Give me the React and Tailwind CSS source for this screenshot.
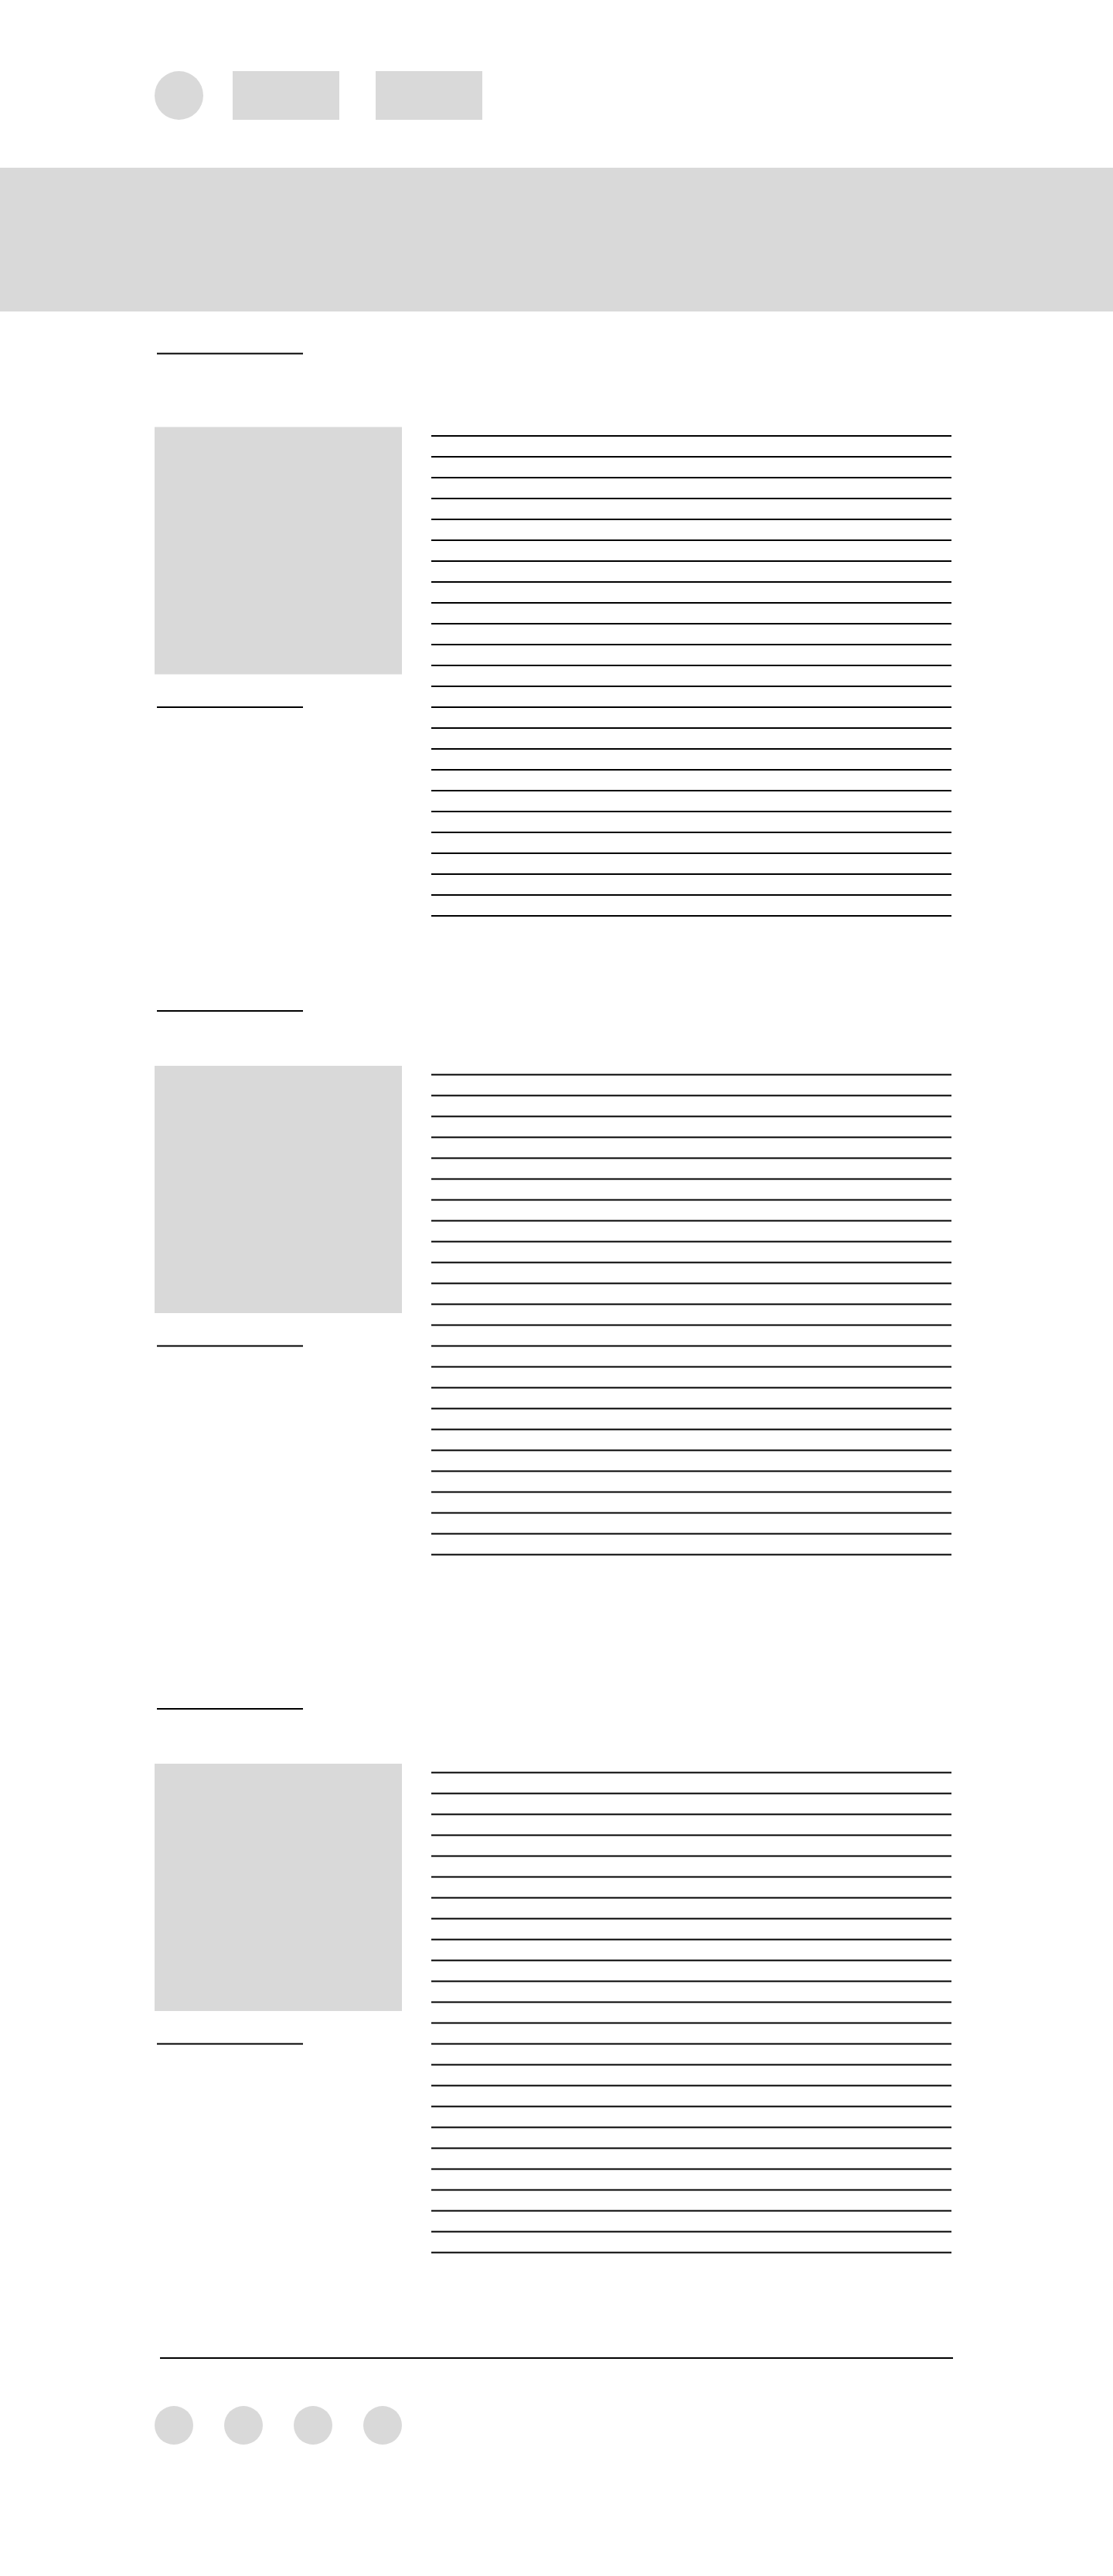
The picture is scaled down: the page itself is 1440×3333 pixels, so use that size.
const LINES_PER_SECTION = 24;

function Rule({ soft = false, className = "" }) {
  const tone = soft
    ? "h-[3px] border-y border-[#808080] bg-black"
    : "h-0.5 bg-black";
  return <div className={`shrink-0 ${tone} ${className}`} />;
}

function Section({ className, softTitle, softCopy, softImage, bodyGap }) {
  return (
    <section className={`pl-[200px] pr-[209px] ${className}`}>
      <Rule soft={softTitle} className="ml-[3px] w-[189px]" />
      <div className={`flex items-start gap-[38px] ${bodyGap}`}>
        <div className="w-80 shrink-0">
          <div
            className={
              softImage
                ? "h-[321px] border-y border-[#ececec] bg-[#d9d9d9]"
                : "h-80 bg-[#d9d9d9]"
            }
          />
          <Rule soft={softCopy} className="ml-[3px] mt-[41px] w-[189px]" />
        </div>
        <div
          className={`flex min-w-0 flex-1 flex-col ${
            softCopy ? "gap-6 pt-2.5" : "gap-[25px] pt-[11px]"
          }`}
        >
          {Array.from({ length: LINES_PER_SECTION }, (_, i) => (
            <Rule key={i} soft={softCopy} />
          ))}
        </div>
      </div>
    </section>
  );
}

export default function App() {
  return (
    <div className="bg-white">
      <header className="flex items-center pb-[62px] pl-[200px] pt-[92px]">
        <div className="size-[63px] rounded-full bg-[#d9d9d9]" />
        <nav className="ml-[38px] flex gap-[47px]">
          <div className="h-[63px] w-[138px] bg-[#d9d9d9]" />
          <div className="h-[63px] w-[138px] bg-[#d9d9d9]" />
        </nav>
      </header>
      <div className="h-[186px] bg-[#d9d9d9]" />
      <main>
        <Section className="pt-[53px]" bodyGap="mt-[93px]" softTitle softImage />
        <Section className="pt-[121px]" bodyGap="mt-[70px]" softCopy />
        <Section className="pt-[197px]" bodyGap="mt-[70px]" softCopy />
      </main>
      <footer className="pb-[170px] pl-[200px] pr-[207px] pt-[134px]">
        <Rule className="ml-[7px]" />
        <div className="mt-[61px] flex gap-10">
          {Array.from({ length: 4 }, (_, i) => (
            <div key={i} className="size-[50px] rounded-full bg-[#d9d9d9]" />
          ))}
        </div>
      </footer>
    </div>
  );
}
